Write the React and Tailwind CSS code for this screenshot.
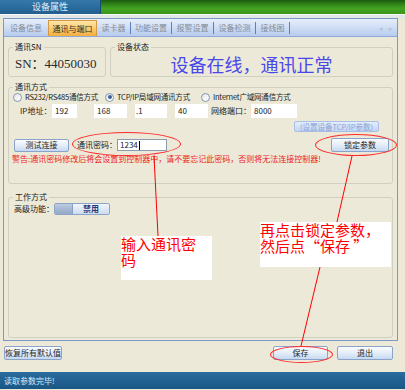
const Btn = ({ className, children }) => (
    <button
        type="button"
        className={`flex items-center justify-center whitespace-nowrap rounded-[2px] border border-[#8aa3c8] bg-[linear-gradient(to_bottom,#fafcff,#e2ecf9_55%,#c6d8f1)] text-[8px] leading-[10px] text-[#1d1d1d] ${className}`}
    >
        {children}
    </button>
);

const Group = ({ label, className, children }) => (
    <fieldset className={`rounded-[3px] border border-[#cfd0c2] ${className}`}>
        <legend className="ml-[4px] px-[2px] text-[8px] leading-[10px] text-[#1a1a1a]">{label}</legend>
        {children}
    </fieldset>
);

const Radio = ({ checked, label, className }) => (
    <div className={`flex items-center gap-[3px] whitespace-nowrap ${className}`}>
        <span className="flex h-[9px] w-[9px] shrink-0 items-center justify-center rounded-full border border-[#8797ad] bg-[linear-gradient(135deg,#e4e7ec,#ffffff)]">
            {checked && <span className="h-[4px] w-[4px] rounded-full bg-[#3d5f9e]" />}
        </span>
        <span className="text-[7.5px] leading-[10px] tracking-[-0.2px] text-[#1a1a1a]">{label}</span>
    </div>
);

const Field = ({ className, children }) => (
    <div className={`flex h-[14px] items-center bg-white text-[8px] leading-[10px] text-[#1a1a1a] ${className}`}>{children}</div>
);

const tabs = [
    { name: "设备信息", w: "w-[44px]" },
    { name: "通讯与端口", w: "w-[49px]", active: true },
    { name: "读卡器", w: "w-[34px]", sep: true },
    { name: "功能设置", w: "w-[41px]", sep: true },
    { name: "报警设置", w: "w-[42px]", sep: true },
    { name: "设备检测", w: "w-[42px]", sep: true },
    { name: "接线图", w: "w-[34px]", sep: true },
];

export default function App() {
    return (
        <div className="relative h-[390px] w-[405px] overflow-hidden bg-[#ece9d8] font-['Noto_Sans_CJK_SC',sans-serif]">
            {/* title bar */}
            <div className="flex h-[14px]">
                <div className="flex w-[101px] items-center justify-center border-r border-[#174a72] bg-[linear-gradient(to_bottom,#3579aa,#215f90)] text-[9px] leading-[10px] text-[#e2ecf5]">
                    设备属性
                </div>
                <div className="flex-1 bg-[linear-gradient(to_bottom,#1d5a12_0%,#2c7e15_25%,#44a222_60%,#3b971b_100%)]" />
            </div>
            <div className="h-[4px] border-t border-[#f6f8f4] bg-[#e3e7e6]" />

            {/* tab panel */}
            <div className="ml-[3px] w-[395px] border border-[#7b98c6] bg-[#ece9d8]">
                <div className="flex h-[18px] items-stretch border-b border-[#8ea9da] bg-[linear-gradient(to_bottom,#e6eefb,#cbdaf3_60%,#b6cbee)] pt-[1px]">
                    {tabs.map((t) =>
                        t.active ? (
                            <div
                                key={t.name}
                                className={`${t.w} flex items-center justify-center border border-b-0 border-[#d29a45] bg-[linear-gradient(to_bottom,#ffe6a8,#fbc565_60%,#f4ad3e)] text-[8px] leading-[10px] text-[#2a2a2a]`}
                            >
                                {t.name}
                            </div>
                        ) : (
                            <div key={t.name} className={`${t.w} flex items-center justify-center py-[2px]`}>
                                <span
                                    className={`flex h-full w-full items-center justify-center text-[8px] leading-[10px] text-[#858b93] ${t.sep ? "border-r border-[#5c7fb8]" : ""}`}
                                >
                                    {t.name}
                                </span>
                            </div>
                        )
                    )}
                    <div className="ml-auto mr-[4px] flex items-center gap-[6px] text-[7px] text-[#b5c3dc]">
                        <span>◂</span>
                        <span>▸</span>
                    </div>
                </div>

                <div className="flex flex-col px-[4px] pb-[2px] pt-[5px]">
                    <div className="flex h-[35px] gap-[4px]">
                        <Group label="通讯SN" className="w-[98px]">
                            <div className="flex h-[24px] items-center pl-[6px] font-['Liberation_Serif','Noto_Sans_CJK_SC',serif] text-[13px] leading-[16px] text-[#2a2a2a]">
                                SN：44050030
                            </div>
                        </Group>
                        <Group label="设备状态" className="flex-1">
                            <div className="flex h-[24px] items-center justify-center text-[18px] leading-[20px] text-[#4848ea]">
                                设备在线，通讯正常
                            </div>
                        </Group>
                    </div>

                    <Group label="通讯方式" className="mt-[5px] h-[102px]">
                        <div className="flex h-[10px] items-center pl-[4px]">
                            <Radio label="RS232/RS485通信方式" className="w-[92px]" />
                            <Radio label="TCP/IP局域网通讯方式" checked className="w-[96px]" />
                            <Radio label="Internet广域网通信方式" />
                        </div>
                        <div className="mt-[2px] flex h-[14px] items-center pl-[11px]">
                            <span className="w-[32px] whitespace-nowrap text-[8px] leading-[10px] text-[#1a1a1a]">IP地址：</span>
                            <Field className="w-[25px] pl-[3px]">192</Field>
                            <Field className="ml-[17px] w-[33px] pl-[3px]">168</Field>
                            <Field className="ml-[8px] w-[32px] pl-[1px]">.1</Field>
                            <Field className="ml-[8px] w-[33px] pl-[3px]">40</Field>
                            <span className="ml-[3px] w-[40px] whitespace-nowrap text-[8px] leading-[10px] text-[#1a1a1a]">网络端口：</span>
                            <Field className="w-[46px] pl-[3px]">8000</Field>
                        </div>
                        <div className="mt-[3px] flex h-[11px] justify-end pr-[13px]">
                            <button
                                type="button"
                                className="flex w-[85px] items-center justify-center whitespace-nowrap rounded-[2px] border border-[#a9bfe6] bg-[linear-gradient(to_bottom,#e4edfc,#c3d6f6)] text-[7.5px] leading-[9px] text-[#8ea2cf]"
                            >
                                (设置设备TCP/IP参数)
                            </button>
                        </div>
                        <div className="mt-[6px] flex h-[14px] items-center pl-[5px] pr-[3px]">
                            <Btn className="h-[13px] w-[55px]">测试连接</Btn>
                            <span className="ml-[8px] w-[40px] whitespace-nowrap text-[8px] leading-[10px] text-[#1a1a1a]">通讯密码：</span>
                            <div className="flex h-[12px] w-[50px] items-center border border-[#8b9bb0] bg-white pl-[2px] text-[8px] leading-[10px] text-[#1a1a1a]">
                                1234
                                <span className="ml-[1px] h-[9px] w-[1px] bg-black" />
                            </div>
                            <Btn className="ml-auto h-[14px] w-[58px]">锁定参数</Btn>
                        </div>
                        <div className="mt-[2px] whitespace-nowrap pl-[3px] text-[8px] leading-[10px] text-[#ee1c1c]">
                            警告:通讯密码修改后将会设置到控制器中，请不要忘记此密码，否则将无法连接控制器!
                        </div>
                    </Group>

                    <Group label="工作方式" className="mt-[8px] h-[146px]">
                        <div className="flex h-[13px] items-center pl-[5px]">
                            <span className="w-[40px] whitespace-nowrap text-[8px] leading-[10px] text-[#1a1a1a]">高级功能：</span>
                            <div className="flex h-[12px] w-[56px] overflow-hidden rounded-[2px] border border-[#8ea4c6]">
                                <div className="w-[18px] border-r border-[#8aa0c0] bg-[linear-gradient(to_bottom,#bccbe0,#93a8c5)]" />
                                <div className="flex flex-1 items-center justify-center bg-[linear-gradient(to_bottom,#f1f6fd,#cddcf2)] text-[8px] font-bold leading-[10px] text-[#23397a]">
                                    禁用
                                </div>
                            </div>
                        </div>
                    </Group>
                </div>
            </div>

            {/* bottom buttons */}
            <div className="mt-[5px] flex h-[14px] items-center pl-[4px] pr-[12px]">
                <Btn className="h-[14px] w-[58px]">恢复所有默认值</Btn>
                <Btn className="ml-auto h-[14px] w-[55px]">保存</Btn>
                <Btn className="ml-[9px] h-[14px] w-[56px]">退出</Btn>
            </div>

            {/* status bar */}
            <div className="mt-[12px] flex h-[17px] items-center bg-[linear-gradient(to_bottom,#2a6c9e,#195684)] pl-[4px] text-[8px] leading-[10px] text-[#dce8f3]">
                读取参数完毕!
            </div>

            {/* annotations */}
            <div className="absolute left-[121px] top-[236px] h-[44px] w-[91px] bg-white text-[15px] leading-[16px] text-[#ff0000]">
                输入通讯密
                <br />码
            </div>
            <div className="absolute left-[260px] top-[222px] h-[45px] w-[131px] whitespace-nowrap bg-white text-[15px] leading-[16px] text-[#ff0000]">
                再点击锁定参数，
                <br />然后点“保存 ”
            </div>
            <div className="absolute left-[72px] top-[132px] h-[24px] w-[109px] rounded-[50%] border border-[#ff2a2a]" />
            <div className="absolute left-[315px] top-[134px] h-[22px] w-[82px] rounded-[50%] border border-[#ff2a2a]" />
            <div className="absolute left-[270px] top-[346px] h-[17px] w-[63px] rounded-[50%] border border-[#ff2a2a]" />
            <svg className="pointer-events-none absolute left-0 top-0" width="405" height="390">
                <line x1="154" y1="156" x2="158" y2="236" stroke="#ff0000" strokeWidth="1" />
                <line x1="352" y1="156" x2="337" y2="222" stroke="#ff0000" strokeWidth="1" />
                <line x1="320" y1="267" x2="301" y2="346" stroke="#ff0000" strokeWidth="1" />
            </svg>
        </div>
    );
}
